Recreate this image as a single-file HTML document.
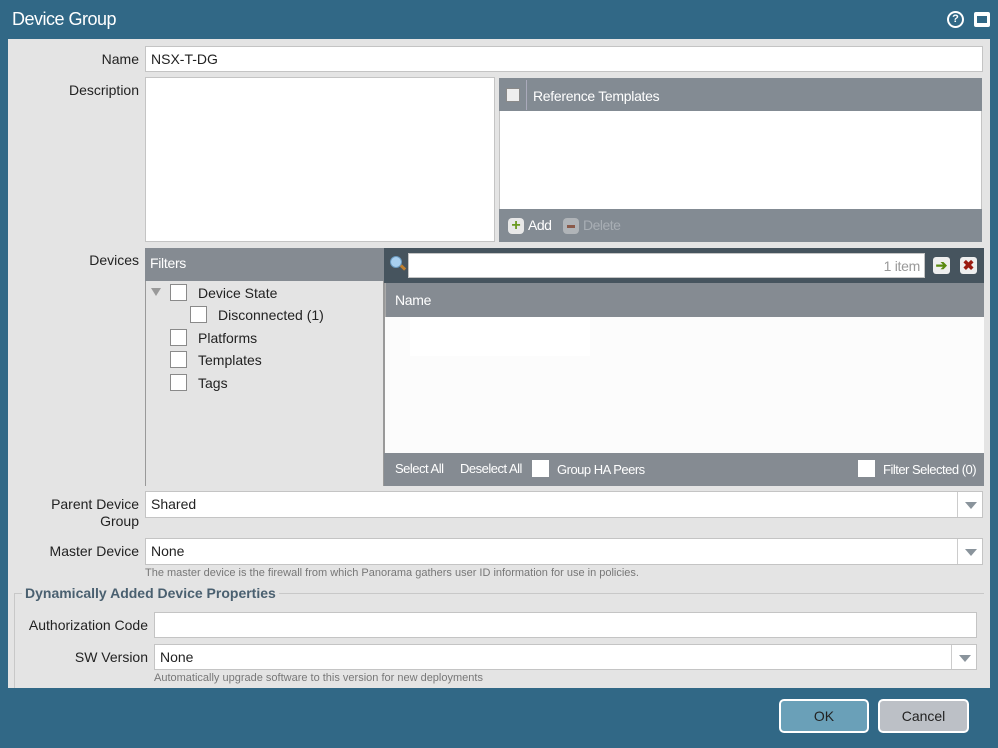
<!DOCTYPE html>
<html><head><style>
*{box-sizing:border-box;margin:0;padding:0}
body{width:998px;height:748px;background:#316886;font-family:"Liberation Sans",sans-serif;font-size:14px;color:#222;position:relative;overflow:hidden}
.a{position:absolute}
.lbl{position:absolute;text-align:right;font-size:14px;color:#222}
.in{position:absolute;background:#fff;border:1px solid #c4c4c4;font-size:14px;padding-left:5px;line-height:24px}
.cb{position:absolute;width:17px;height:17px;background:#fff;border:1px solid #8a8a8a}
.arr{position:absolute;right:0;top:0;width:25px;height:100%;border-left:1px solid #ccc;background:#fff}
.arr:after{content:"";position:absolute;left:7px;top:10px;border-left:6px solid transparent;border-right:6px solid transparent;border-top:7px solid #8a949c}
.hlp{position:absolute;font-size:11px;color:#777}
.ft{position:absolute;color:#fff;font-size:13px;letter-spacing:-0.5px}
</style></head><body>
<div class="a" style="left:12px;top:9px;color:#fff;font-size:18px;letter-spacing:-0.5px">Device Group</div>
<div class="a" style="left:947px;top:11px;width:17px;height:17px;border-radius:50%;background:#fff;"><div style="position:absolute;left:2px;top:2px;width:13px;height:13px;border-radius:50%;background:#316886;color:#fff;font-size:11px;font-weight:bold;text-align:center;line-height:13px">?</div></div>
<div class="a" style="left:974px;top:12px;width:16px;height:15px;background:#fff;border-radius:2px"><div style="position:absolute;left:3px;top:4px;width:10px;height:7px;background:#316886"></div></div>

<div class="a" style="left:8px;top:39px;width:982px;height:649px;background:#e4e4e4"></div>

<div class="lbl" style="left:40px;width:99px;top:51px">Name</div>
<div class="in" style="left:145px;top:46px;width:838px;height:26px">NSX-T-DG</div>
<div class="lbl" style="left:40px;width:99px;top:82px">Description</div>
<div class="in" style="left:145px;top:77px;width:350px;height:165px"></div>

<div class="a" style="left:499px;top:78px;width:483px;height:164px;background:#fff;border:1px solid #c4c4c4"></div>
<div class="a" style="left:499px;top:78px;width:483px;height:33px;background:#838b93"></div>
<div class="cb" style="left:506px;top:88px;width:14px;height:14px;background:#eee"></div>
<div class="a" style="left:526px;top:80px;width:1px;height:30px;background:#aab"></div>
<div class="a" style="left:533px;top:88px;color:#fff;letter-spacing:-0.3px">Reference Templates</div>
<div class="a" style="left:499px;top:209px;width:483px;height:33px;background:#838b93"></div>
<div class="a" style="left:508px;top:218px;width:16px;height:16px;border-radius:4px;background:#e8e8e8;color:#6a9a20;font-weight:bold;font-size:16px;line-height:15px;text-align:center">+</div>
<div class="ft" style="left:528px;top:217px;font-size:14px">Add</div>
<div class="a" style="left:563px;top:218px;width:16px;height:16px;border-radius:4px;background:#b0b4b8"><div style="position:absolute;left:4px;top:7px;width:8px;height:3px;background:#8a5a4a"></div></div>
<div class="ft" style="left:583px;top:217px;color:#a8aeb4;font-size:14px">Delete</div>

<div class="lbl" style="left:40px;width:99px;top:252px">Devices</div>
<div class="a" style="left:145px;top:248px;width:239px;height:238px;border-left:1px solid #999;border-right:1px solid #999"></div>
<div class="a" style="left:145px;top:248px;width:239px;height:33px;background:#858b92;color:#fff;padding:7px 0 0 5px;letter-spacing:-0.3px">Filters</div>
<div class="a" style="left:151px;top:288px;border-left:5px solid transparent;border-right:5px solid transparent;border-top:8px solid #999"></div>
<div class="cb" style="left:170px;top:284px"></div><div class="a" style="left:198px;top:285px">Device State</div>
<div class="cb" style="left:190px;top:306px"></div><div class="a" style="left:218px;top:307px">Disconnected (1)</div>
<div class="cb" style="left:170px;top:329px"></div><div class="a" style="left:198px;top:330px">Platforms</div>
<div class="cb" style="left:170px;top:351px"></div><div class="a" style="left:198px;top:352px">Templates</div>
<div class="cb" style="left:170px;top:374px"></div><div class="a" style="left:198px;top:375px">Tags</div>

<div class="a" style="left:384px;top:248px;width:600px;height:238px;background:#fcfcfc;border-left:1px solid #999"></div>
<div class="a" style="left:384px;top:248px;width:600px;height:35px;background:#46545e"></div>
<div class="a" style="left:390px;top:256px;width:12px;height:12px;border-radius:50%;background:#a8d0f0;border:1px solid #6a9ac0"></div>
<div class="a" style="left:400px;top:266px;width:6px;height:3px;background:#c08030;transform:rotate(45deg)"></div>
<div class="in" style="left:408px;top:253px;width:517px;height:25px;text-align:right;padding-right:4px;color:#999;letter-spacing:-0.3px">1 item</div>
<div class="a" style="left:933px;top:257px;width:17px;height:17px;border-radius:3px;background:#eee;color:#5a8a10;font-weight:bold;text-align:center;line-height:16px">➔</div>
<div class="a" style="left:960px;top:257px;width:17px;height:17px;border-radius:3px;background:#eee;color:#9a1a10;font-weight:bold;text-align:center;line-height:17px">✖</div>
<div class="a" style="left:385px;top:283px;width:599px;height:34px;background:#858b92;color:#fff;padding:9px 0 0 9px;border-left:1px solid #aaa;letter-spacing:-0.3px">Name</div>
<div class="a" style="left:410px;top:317px;width:180px;height:39px;background:#fff"></div>
<div class="a" style="left:384px;top:453px;width:600px;height:33px;background:#858b92"></div>
<div class="ft" style="left:395px;top:461px">Select All</div>
<div class="ft" style="left:460px;top:461px">Deselect All</div>
<div class="cb" style="left:532px;top:460px;border:none"></div>
<div class="ft" style="left:557px;top:462px">Group HA Peers</div>
<div class="cb" style="left:858px;top:460px;border:none"></div>
<div class="ft" style="left:883px;top:462px">Filter Selected (0)</div>

<div class="lbl" style="left:20px;width:119px;top:496px;line-height:17px">Parent Device<br>Group</div>
<div class="in" style="left:145px;top:491px;width:838px;height:27px">Shared<div class="arr"></div></div>
<div class="lbl" style="left:20px;width:119px;top:543px">Master Device</div>
<div class="in" style="left:145px;top:538px;width:838px;height:27px">None<div class="arr"></div></div>
<div class="hlp" style="left:145px;top:567px">The master device is the firewall from which Panorama gathers user ID information for use in policies.</div>

<div class="a" style="left:14px;top:593px;width:970px;height:95px;border-top:1px solid #c8c8c8;border-left:1px solid #c8c8c8"></div>
<div class="a" style="left:22px;top:585px;background:#e4e4e4;padding:0 3px;color:#4a6070;font-weight:bold;font-size:14px">Dynamically Added Device Properties</div>
<div class="lbl" style="left:20px;width:128px;top:617px">Authorization Code</div>
<div class="in" style="left:154px;top:612px;width:823px;height:26px"></div>
<div class="lbl" style="left:20px;width:128px;top:649px">SW Version</div>
<div class="in" style="left:154px;top:644px;width:823px;height:26px">None<div class="arr"></div></div>
<div class="hlp" style="left:154px;top:672px">Automatically upgrade software to this version for new deployments</div>

<div class="a" style="left:779px;top:699px;width:90px;height:34px;background:#6aa0b8;border:2px solid #fff;border-radius:5px;text-align:center;line-height:30px;color:#222">OK</div>
<div class="a" style="left:878px;top:699px;width:91px;height:34px;background:#bcc0c6;border:2px solid #fff;border-radius:5px;text-align:center;line-height:30px;color:#222">Cancel</div>
</body></html>
